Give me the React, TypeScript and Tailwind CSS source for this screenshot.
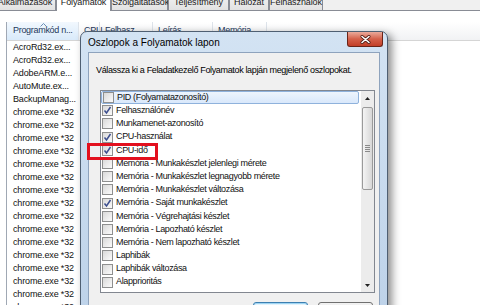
import React from 'react';

const tabs = [
  { label: 'Alkalmazások', w: 'w-[62px]', active: false },
  { label: 'Folyamatok', w: 'w-[55px]', active: true },
  { label: 'Szolgáltatások', w: 'w-[57px]', active: false },
  { label: 'Teljesítmény', w: 'w-[61px]', active: false },
  { label: 'Hálózat', w: 'w-[40px]', active: false },
  { label: 'Felhasználók', w: 'w-[54px]', active: false },
];

const headers = [
  { label: 'CPU', w: 'w-[21px]' },
  { label: 'Felhasz...', w: 'w-[53px]' },
  { label: 'Leírás', w: 'w-[60px]' },
  { label: 'Memória', w: 'w-[54px]' },
];

const processes = [
  'AcroRd32.ex...',
  'AcroRd32.ex...',
  'AdobeARM.e...',
  'AutoMute.ex...',
  'BackupManag...',
  ...Array(17).fill('chrome.exe *32'),
];

const columns: [string, boolean][] = [
  ['PID (Folyamatazonosító)', false],
  ['Felhasználónév', true],
  ['Munkamenet-azonosító', false],
  ['CPU-használat', true],
  ['CPU-idő', true],
  ['Memória - Munkakészlet jelenlegi mérete', false],
  ['Memória - Munkakészlet legnagyobb mérete', false],
  ['Memória - Munkakészlet változása', false],
  ['Memória - Saját munkakészlet', true],
  ['Memória - Végrehajtási készlet', false],
  ['Memória - Lapozható készlet', false],
  ['Memória - Nem lapozható készlet', false],
  ['Laphibák', false],
  ['Laphibák változása', false],
  ['Alapprioritás', false],
];

function CheckBox({ checked }: { checked: boolean }) {
  return (
    <div className="flex h-[11px] w-[11px] shrink-0 items-center justify-center border border-[#8e8f8f] bg-gradient-to-br from-[#d9d9d9] to-[#fbfbfb]">
      {checked && (
        <svg width="9" height="9" viewBox="0 0 9 9">
          <path d="M1.5 4.5 L3.5 7 L7.5 1" fill="none" stroke="#3d4f8f" strokeWidth="1.5" />
        </svg>
      )}
    </div>
  );
}

function ScrollArrow({ down }: { down?: boolean }) {
  return (
    <svg width="5" height="3" viewBox="0 0 5 3">
      <path d={down ? 'M0 0 H5 L2.5 3 Z' : 'M0 3 H5 L2.5 0 Z'} fill="#222" />
    </svg>
  );
}

export default function App() {
  return (
    <div className="relative h-[305px] w-[480px] overflow-hidden bg-white font-['Liberation_Sans',Arial,sans-serif] text-black">
      {/* tab strip, cut off at the top */}
      <div className="flex h-[11px] items-end overflow-hidden bg-[#f0f0f0]">
        <div className="-ml-[6px] flex shrink-0 items-end">
          {tabs.map((t) => (
            <div
              key={t.label}
              className={`${t.w} h-[18px] shrink-0 whitespace-nowrap border border-[#898c95] text-center text-[9px] leading-[17px] tracking-[-0.1px] text-[#222] ${
                t.active ? 'border-b-0 bg-white' : 'bg-gradient-to-b from-[#f3f3f3] to-[#e2e2e2]'
              }`}
            >
              {t.label}
            </div>
          ))}
        </div>
        <div className="h-full flex-1 border-b border-[#898c95]" />
      </div>

      {/* process list behind the dialog */}
      <div className="pl-[6px] pt-[11px]">
        <div className="border-l border-[#a0a8b4]">
          <div className="flex h-[19px] border-b border-[#d5d5d5] bg-gradient-to-b from-white to-[#f1f2f4] text-[9px] tracking-[-0.3px] text-[#1e395b]">
            <div className="relative flex w-[72px] items-center border-r border-[#dde3ea] bg-gradient-to-b from-[#f2f8fe] to-[#d9eafa] pl-[6px]">
              <svg className="absolute left-[33px] top-[1px]" width="7" height="4" viewBox="0 0 7 4">
                <path d="M0.5 3.5 L3.5 0.5 L6.5 3.5" fill="none" stroke="#6b8fb6" strokeWidth="1" />
              </svg>
              Programkód n...
            </div>
            {headers.map((h) => (
              <div key={h.label} className={`${h.w} flex items-center border-r border-[#dde3ea] pl-[5px]`}>
                {h.label}
              </div>
            ))}
            <div className="flex-1" />
          </div>
          {processes.map((p, i) => (
            <div key={i} className="flex h-[13px] items-center pl-[6px] text-[9px] tracking-[-0.15px] text-[#111]">
              {p}
            </div>
          ))}
        </div>
      </div>

      {/* dialog window */}
      <div className="absolute left-[80px] top-[31px] h-[290px] w-[308px] rounded-t-[7px] border border-[#4f5f72] bg-gradient-to-b from-[#d3e3f3] to-[#bdd2e9] shadow-[4px_3px_9px_rgba(0,0,0,0.45)]">
        <div className="flex h-[20px] items-center pl-[7px] text-[10px] text-black">Oszlopok a Folyamatok lapon</div>
        <div className="absolute right-[4px] top-0 flex h-[15px] w-[36px] items-center justify-center rounded-b-[3px] border border-t-0 border-[#6a2418] bg-gradient-to-b from-[#e9aa9b] via-[#d4604a] to-[#c23e27]">
          <svg width="11" height="9" viewBox="0 0 11 9">
            <path d="M2 1.5 L9 7.5 M9 1.5 L2 7.5" stroke="#4a1a12" strokeWidth="3" strokeLinecap="round" />
            <path d="M2 1.5 L9 7.5 M9 1.5 L2 7.5" stroke="#fff" strokeWidth="1.6" strokeLinecap="round" />
          </svg>
        </div>

        <div className="mx-[7px] h-[300px] border border-[#8ea3bd] bg-[#f0f0f0]">
          <p className="pl-[7px] pt-[11px] text-[9px] leading-[12px] tracking-[-0.35px]">
            Válassza ki a Feladatkezelő Folyamatok lapján megjelenő oszlopokat.
          </p>
          <div className="ml-[11px] mt-[14px] flex h-[203px] w-[275px] border border-[#828790] bg-white">
            <div className="flex-1">
              {columns.map(([label, checked], i) => (
                <div
                  key={label}
                  className={`mr-[2px] flex h-[13.2px] items-center gap-[3px] pl-[1px] text-[9px] tracking-[-0.35px] text-[#111] ${
                    i === 0 ? 'rounded-[2px] border border-[#8fb2dc] bg-gradient-to-b from-[#eef5fd] to-[#d9e8fb] pl-0' : ''
                  }`}
                >
                  <CheckBox checked={checked} />
                  <span>{label}</span>
                </div>
              ))}
            </div>
            <div className="flex w-[13px] flex-col bg-[#ececec]">
              <div className="flex h-[15px] items-center justify-center">
                <ScrollArrow />
              </div>
              <div className="mx-[1px] mt-[1px] flex h-[83px] items-center justify-center rounded-[2px] border border-[#9a9a9a] bg-gradient-to-r from-[#f4f4f4] to-[#d7d7d7]">
                <div className="flex flex-col gap-[1px]">
                  <div className="h-px w-[5px] bg-[#8a8a8a]" />
                  <div className="h-px w-[5px] bg-[#8a8a8a]" />
                  <div className="h-px w-[5px] bg-[#8a8a8a]" />
                  <div className="h-px w-[5px] bg-[#8a8a8a]" />
                </div>
              </div>
              <div className="flex-1" />
              <div className="flex h-[14px] items-center justify-center">
                <ScrollArrow down />
              </div>
            </div>
          </div>
          <div className="mt-[9px] flex justify-end gap-[10px] pr-[6px]">
            <div className="h-[21px] w-[55px] rounded-[3px] border border-[#3c7fb1] bg-gradient-to-b from-[#e5f4fc] to-[#c4e5f6] shadow-[inset_0_0_0_1px_#9fd5f3]" />
            <div className="h-[21px] w-[55px] rounded-[3px] border border-[#707070] bg-gradient-to-b from-[#f2f2f2] to-[#dddddd]" />
          </div>
        </div>

        {/* red highlight around CPU-idő */}
        <div className="absolute left-[6px] top-[111px] h-[17px] w-[71px] border-[3px] border-[#e3101e]" />
      </div>
    </div>
  );
}
